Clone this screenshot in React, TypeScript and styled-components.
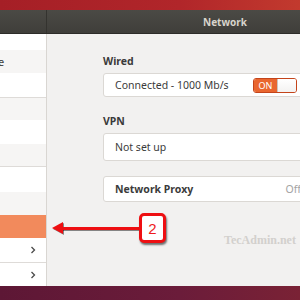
import React from "react";
import styled, { createGlobalStyle } from "styled-components";

const GlobalStyle = createGlobalStyle`
  html, body {
    margin: 0;
    padding: 0;
    background: #5a1933;
  }
  body {
    font-family: "Noto Sans", "Open Sans", sans-serif;
  }
`;

const Screen = styled.div`
  position: relative;
  width: 300px;
  height: 300px;
  overflow: hidden;
  display: flex;
  flex-direction: column;
`;

const TopStrip = styled.div`
  height: 10px;
  background: linear-gradient(90deg, #a51f26 0%, #b1262a 60%, #c23a2e 100%);
`;

const Window = styled.div`
  height: 276px;
  display: flex;
  flex-direction: column;
`;

const Header = styled.div`
  height: 24px;
  display: flex;
  background: linear-gradient(180deg, #4b4a45 0%, #3f3e3a 100%);
  border-bottom: 1px solid #2d2c29;
  box-sizing: border-box;
`;

const HeaderSide = styled.div`
  width: 46px;
  border-right: 1px solid #34332f;
`;

const HeaderMain = styled.div`
  flex: 1;
  padding-left: 156px;
  display: flex;
  align-items: center;
  color: #d8d4cc;
  font-size: 10px;
  font-weight: 700;
`;

const Body = styled.div`
  flex: 1;
  display: flex;
  min-height: 0;
`;

const Sidebar = styled.div`
  width: 46px;
  background: #ffffff;
  border-right: 1px solid #d9d6d2;
  overflow: hidden;
`;

const SidebarList = styled.div`
  display: flex;
  flex-direction: column;
`;

const Row = styled.div<{ $h: number; $tone: "white" | "gray" | "active"; $sep?: boolean }>`
  height: ${(p) => p.$h}px;
  display: flex;
  align-items: center;
  justify-content: flex-end;
  padding: 0 10px 0 0;
  box-sizing: border-box;
  background: ${(p) =>
    p.$tone === "active" ? "#f28a5c" : p.$tone === "gray" ? "#f6f5f4" : "#ffffff"};
  border-bottom: ${(p) => (p.$sep ? "1px solid #dedbd8" : "none")};
`;

/* the window is cropped on the left: only the tail of the longest label shows */
const CroppedLabel = styled.span`
  flex: 1;
  font-size: 11px;
  color: #3c3c3c;
  white-space: nowrap;
  text-align: left;
  margin-left: -2px;
`;

const Chevron = () => (
  <svg width="6" height="8" viewBox="0 0 6 8">
    <polyline points="1.5,1 4.5,4 1.5,7" fill="none" stroke="#4a4a4a" strokeWidth="1.3" />
  </svg>
);

const Content = styled.div`
  flex: 1;
  background: #f2f1f0;
  padding: 20px 0 0 56px;
  overflow: hidden;
  display: flex;
  flex-direction: column;
`;

const Heading = styled.div<{ $top?: number }>`
  margin-top: ${(p) => p.$top ?? 0}px;
  height: 14px;
  line-height: 14px;
  font-size: 10.5px;
  font-weight: 700;
  color: #3a3a3a;
  margin-bottom: 5px;
`;

const Card = styled.div<{ $h: number; $top?: number }>`
  width: 230px;
  height: ${(p) => p.$h}px;
  margin-top: ${(p) => p.$top ?? 0}px;
  box-sizing: border-box;
  background: #ffffff;
  border: 1px solid #dbd8d4;
  border-radius: 3px;
  display: flex;
  align-items: center;
  padding: 0 10px 0 11px;
  font-size: 10.5px;
  color: #3b3b3b;
`;

const CardLabel = styled.span<{ $bold?: boolean }>`
  flex: 1;
  font-weight: ${(p) => (p.$bold ? 700 : 400)};
`;

const Muted = styled.span`
  color: #a3a3a3;
  margin-right: 21px;
`;

const Toggle = styled.div`
  width: 44px;
  height: 15px;
  display: flex;
  border: 1px solid #c4441a;
  border-radius: 3px;
  overflow: hidden;
  margin-right: 25px;
  box-sizing: border-box;
`;

const ToggleOn = styled.div`
  width: 23px;
  background: #e9662f;
  color: #ffffff;
  font-size: 9px;
  display: flex;
  align-items: center;
  justify-content: center;
`;

const ToggleKnob = styled.div`
  flex: 1;
  background: linear-gradient(180deg, #ffffff, #f3f2f1);
  border-left: 1px solid #c9c5c0;
`;

const Desktop = styled.div`
  flex: 1;
  background: linear-gradient(90deg, #5d1735 0%, #6b1c3a 60%, #7a2235 100%);
`;

const Arrow = styled.svg`
  position: absolute;
  left: 52px;
  top: 221px;
`;

const Callout = styled.div`
  position: absolute;
  left: 139px;
  top: 213px;
  width: 27px;
  height: 30px;
  box-sizing: border-box;
  border: 3px solid #ee0f12;
  border-radius: 5px;
  background: #ffffff;
  box-shadow: 1px 2px 2px rgba(0, 0, 0, 0.55);
  color: #ee1c1c;
  font-family: "Liberation Sans", Arial, sans-serif;
  font-size: 15px;
  display: flex;
  align-items: center;
  justify-content: center;
`;

const Watermark = styled.div`
  position: absolute;
  left: 224px;
  top: 233px;
  font-family: "Liberation Serif", "Times New Roman", serif;
  font-size: 12px;
  font-weight: 700;
  color: #d2d0cd;
`;

export default function App() {
  return (
    <>
      <GlobalStyle />
      <Screen>
        <TopStrip />
        <Window>
          <Header>
            <HeaderSide />
            <HeaderMain>Network</HeaderMain>
          </Header>
          <Body>
            <Sidebar>
              <SidebarList>
                <Row $h={16} $tone="white" />
                <Row $h={23} $tone="gray">
                  <CroppedLabel>e</CroppedLabel>
                </Row>
                <Row $h={25} $tone="white" $sep />
                <Row $h={22} $tone="gray" />
                <Row $h={24} $tone="white" />
                <Row $h={23} $tone="gray" $sep />
                <Row $h={25} $tone="white" />
                <Row $h={23} $tone="gray" />
                <Row $h={23} $tone="active" />
                <Row $h={25} $tone="white" $sep>
                  <Chevron />
                </Row>
                <Row $h={24} $tone="white">
                  <Chevron />
                </Row>
              </SidebarList>
            </Sidebar>
            <Content>
              <Heading>Wired</Heading>
              <Card $h={24}>
                <CardLabel>Connected - 1000 Mb/s</CardLabel>
                <Toggle>
                  <ToggleOn>ON</ToggleOn>
                  <ToggleKnob />
                </Toggle>
              </Card>
              <Heading $top={17}>VPN</Heading>
              <Card $h={28}>
                <CardLabel>Not set up</CardLabel>
              </Card>
              <Card $h={26} $top={15}>
                <CardLabel $bold>Network Proxy</CardLabel>
                <Muted>Off</Muted>
              </Card>
            </Content>
          </Body>
        </Window>
        <Desktop />
        <Arrow width="90" height="16" viewBox="0 0 90 16">
          <g transform="translate(1,1)">
            <line x1="8" y1="7.5" x2="88" y2="7.5" stroke="rgba(0,0,0,0.45)" strokeWidth="3" />
            <polygon points="0,7 11,1 11,13" fill="rgba(0,0,0,0.45)" />
          </g>
          <line x1="8" y1="7.5" x2="88" y2="7.5" stroke="#ee0f12" strokeWidth="3" />
          <polygon points="0,7 11,1 11,13" fill="#ee0f12" />
        </Arrow>
        <Callout>2</Callout>
        <Watermark>TecAdmin.net</Watermark>
      </Screen>
    </>
  );
}
